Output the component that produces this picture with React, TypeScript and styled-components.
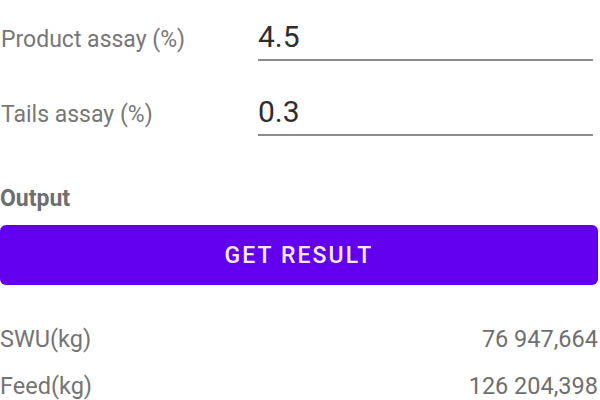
import { useState } from "react";
import styled, { createGlobalStyle } from "styled-components";

const GlobalStyle = createGlobalStyle`
  body {
    margin: 0;
    background: #ffffff;
    font-family: Roboto, "Noto Sans", Arial, sans-serif;
  }
`;

const Screen = styled.div`
  width: 600px;
  height: 400px;
  overflow: hidden;
  background: #ffffff;
  display: flex;
  flex-direction: column;
`;

const FieldRow = styled.label<{ first?: boolean }>`
  display: flex;
  align-items: baseline;
  margin-top: ${(props) => (props.first ? "0" : "14px")};
  padding-right: 7px;
`;

const FieldLabel = styled.span`
  width: 257px;
  flex-shrink: 0;
  font-size: 23px;
  color: #777777;
  padding-left: 1px;
`;

const FieldInput = styled.input`
  flex: 1;
  min-width: 0;
  box-sizing: content-box;
  height: 32px;
  padding: 21px 0 6px 0;
  margin: 0;
  border: none;
  border-bottom: 2px solid #8c8c8c;
  font-family: inherit;
  font-size: 30px;
  line-height: 32px;
  color: #2e2e2e;
  background: transparent;

  &:focus {
    outline: none;
  }
`;

const SectionTitle = styled.div`
  margin-top: 51px;
  font-size: 23px;
  line-height: 24px;
  font-weight: 700;
  color: #6e6e6e;
`;

const ResultButton = styled.button`
  margin-top: 14px;
  width: 598px;
  height: 60px;
  border: none;
  border-radius: 6px;
  background: #6200ee;
  color: #f4eaff;
  font-family: inherit;
  font-size: 23px;
  font-weight: 500;
  letter-spacing: 0.09em;
  text-transform: uppercase;
  cursor: pointer;
`;

const ResultList = styled.div`
  margin-top: 40px;
  display: flex;
  flex-direction: column;
  gap: 19px;
  padding-right: 2px;
`;

const ResultRow = styled.div`
  display: flex;
  justify-content: space-between;
  font-size: 23.5px;
  line-height: 28px;
  color: #747474;
`;

const ResultValue = styled.span`
  color: #6f6f6f;
`;

const results = [
  { label: "SWU(kg)", value: "76 947,664" },
  { label: "Feed(kg)", value: "126 204,398" },
];

const App = () => {
  const [product, setProduct] = useState("4.5");
  const [tails, setTails] = useState("0.3");

  return (
    <>
      <GlobalStyle />
      <Screen>
        <FieldRow first>
          <FieldLabel>Product assay (%)</FieldLabel>
          <FieldInput value={product} onChange={(e) => setProduct(e.target.value)} />
        </FieldRow>
        <FieldRow>
          <FieldLabel>Tails assay (%)</FieldLabel>
          <FieldInput value={tails} onChange={(e) => setTails(e.target.value)} />
        </FieldRow>
        <SectionTitle>Output</SectionTitle>
        <ResultButton>Get result</ResultButton>
        <ResultList>
          {results.map((r) => (
            <ResultRow key={r.label}>
              <span>{r.label}</span>
              <ResultValue>{r.value}</ResultValue>
            </ResultRow>
          ))}
        </ResultList>
      </Screen>
    </>
  );
};

export default App;
